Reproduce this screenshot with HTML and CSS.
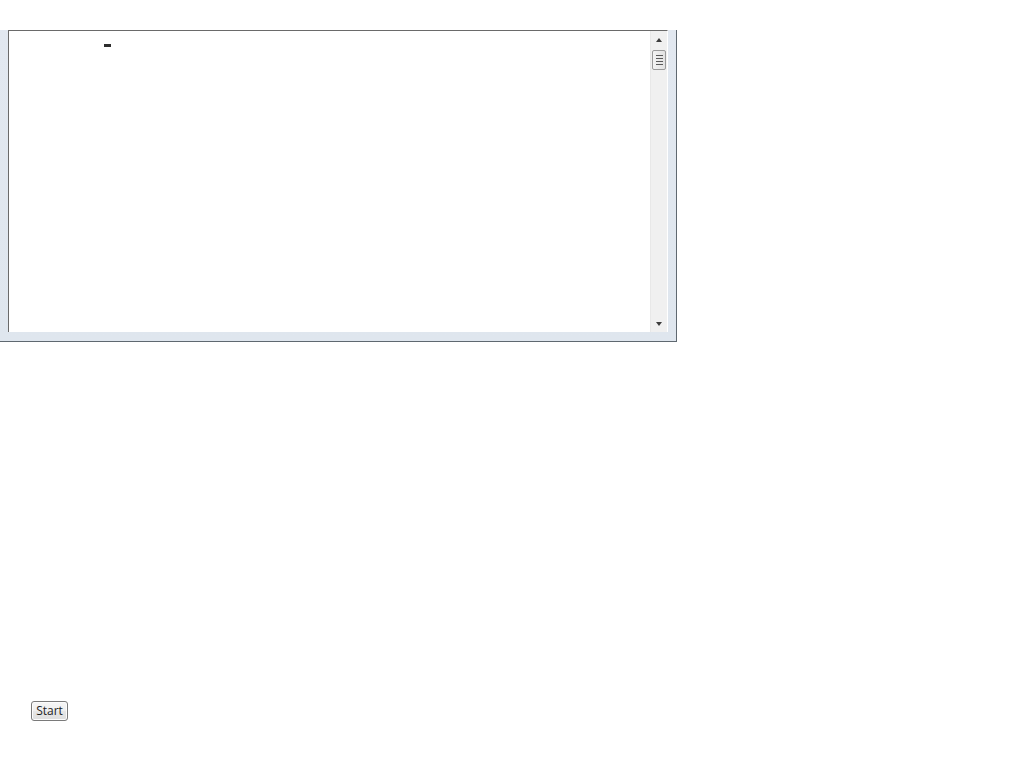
FILE: index.html
```html
<!DOCTYPE html>
<html>
<head>
<meta charset="utf-8">
<title>Start</title>
<link rel="stylesheet" href="styles.css">
</head>
<body>
<div class="window">
  <div class="frame">
    <div class="editor">
      <div class="text-area"><span class="caret-mark"></span></div>
      <div class="scrollbar">
        <div class="arrow arrow-up"></div>
        <div class="thumb"><span></span><span></span><span></span><span></span></div>
        <div class="track"></div>
        <div class="arrow arrow-down"></div>
      </div>
    </div>
  </div>
</div>
<div class="controls">
  <button class="btn" type="button">Start</button>
</div>
</body>
</html>
```
FILE: styles.css
```css
html, body {
  margin: 0;
  padding: 0;
  background: #ffffff;
  font-family: "Open Sans", "DejaVu Sans", sans-serif;
}

.window {
  padding-top: 30px;
}

.frame {
  width: 668px;
  height: 302px;
  padding: 0 8px 9px 0;
  background: linear-gradient(#e2e8f0, #dfe6ee);
  border-right: 1px solid #5f6870;
  border-bottom: 1px solid #5f6870;
  display: flex;
}

.editor {
  margin-left: 8px;
  width: 659px;
  height: 301px;
  border-top: 1px solid #6a6a6a;
  border-left: 1px solid #6a6a6a;
  border-right: 1px solid #ffffff;
  background: #ffffff;
  display: flex;
}

.text-area {
  flex: 1;
}

.caret-mark {
  display: block;
  width: 7px;
  height: 3px;
  background: #2e2e2e;
  margin: 13px 0 0 95px;
}

.scrollbar {
  width: 16px;
  background: #f0f0f0;
  border-left: 1px solid #e8e8e8;
  display: flex;
  flex-direction: column;
  align-items: center;
}

.arrow {
  width: 0;
  height: 0;
  border-left: 3px solid transparent;
  border-right: 3px solid transparent;
}

.arrow-up {
  margin-top: 7px;
  border-bottom: 4px solid #3c3c3c;
}

.arrow-down {
  margin-bottom: 6px;
  border-top: 4px solid #3c3c3c;
}

.thumb {
  margin-top: 8px;
  width: 14px;
  height: 20px;
  border: 1px solid #9a9a9a;
  border-radius: 2px;
  background: linear-gradient(90deg, #f3f3f3, #e2e2e2);
  display: flex;
  flex-direction: column;
  align-items: center;
  justify-content: center;
  gap: 2px;
  box-sizing: border-box;
}

.thumb span {
  display: block;
  width: 7px;
  height: 1px;
  background: #5a5a5a;
}

.track {
  flex: 1;
}

.controls {
  margin-top: 359px;
  padding-left: 31px;
}

.btn {
  display: block;
  height: 20px;
  width: 37px;
  padding: 0;
  font-family: "Open Sans", "DejaVu Sans", sans-serif;
  font-size: 12px;
  color: #1e1e1e;
  border: 1px solid #7a7a7a;
  border-radius: 3px;
  background: linear-gradient(#f6f6f6 0%, #efefef 50%, #e6e6e6 51%, #dedede 100%);
  box-shadow: inset 0 0 0 1px #fcfcfc;
  line-height: 16px;
}
```
